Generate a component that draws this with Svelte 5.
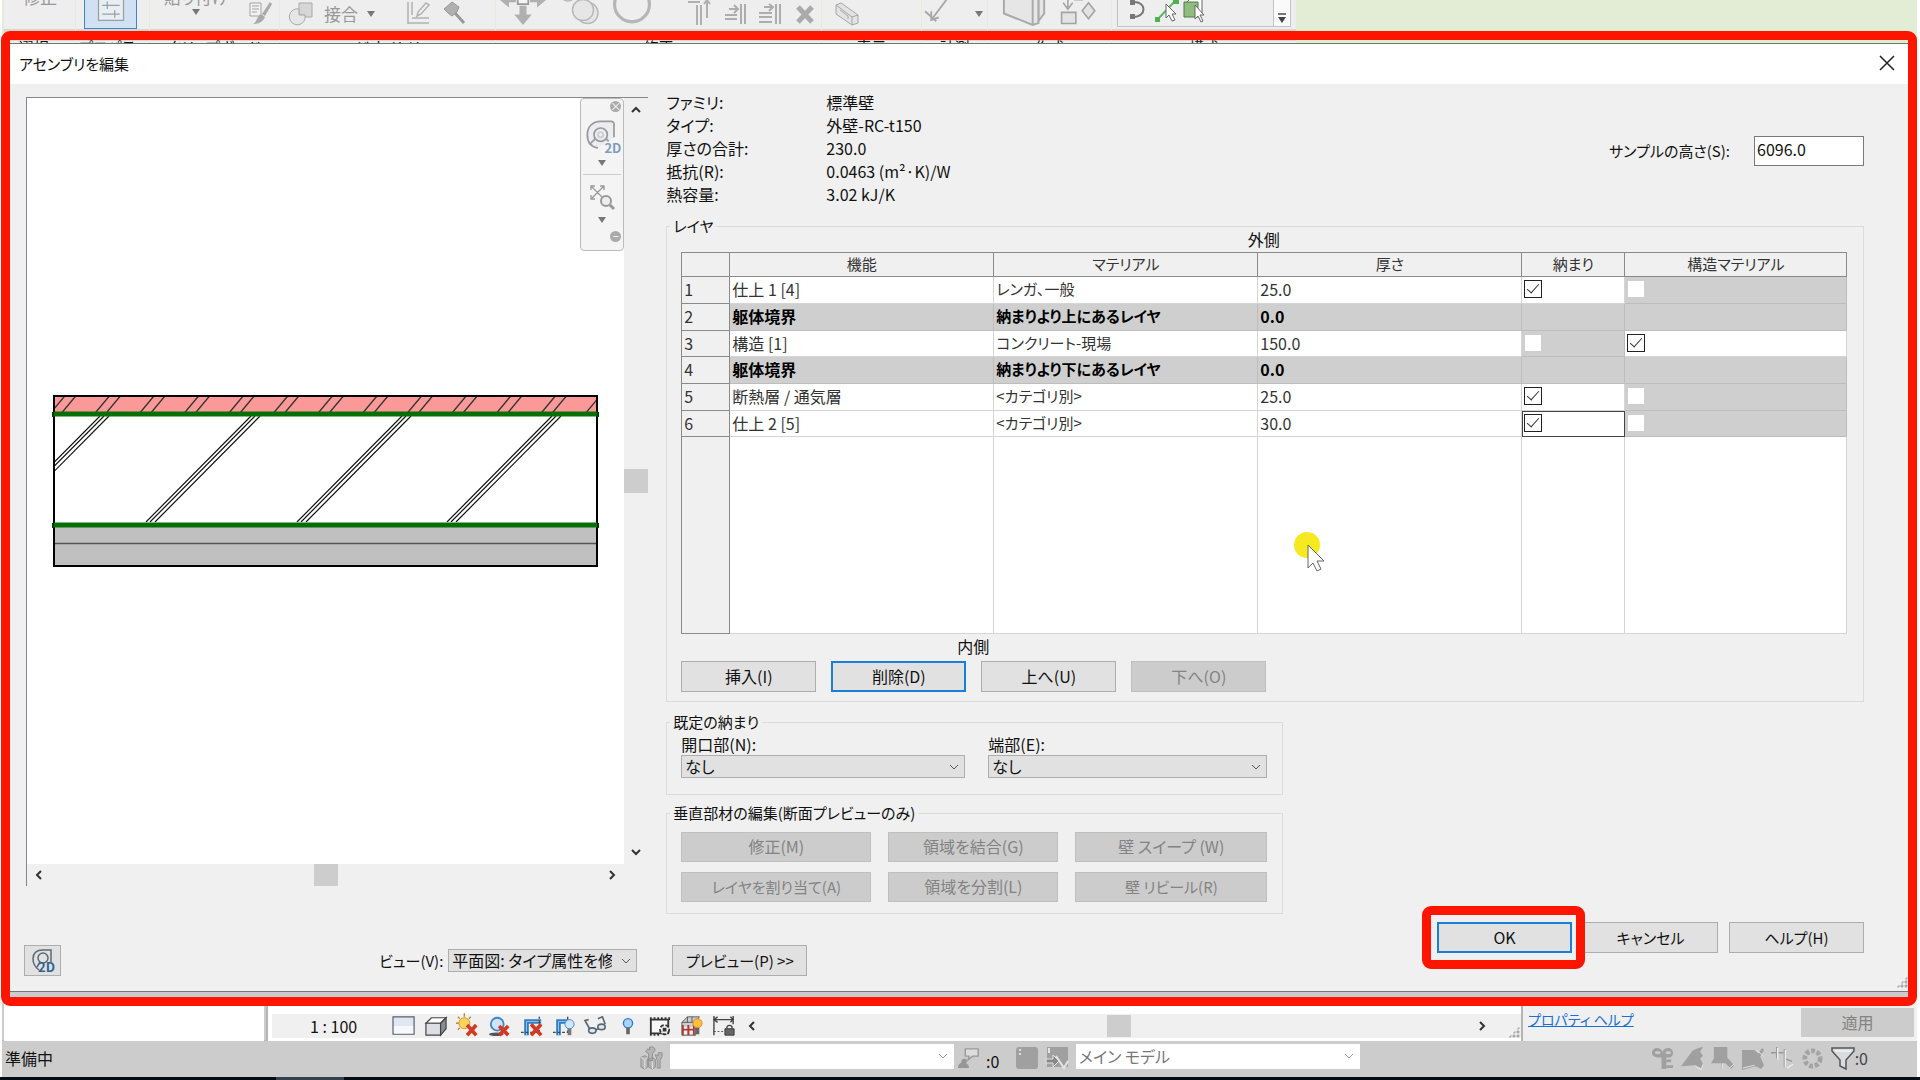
<script lang="ts">
    type Tool = { icon?: string; text?: string; arrow?: boolean; w: number; gap?: number; size?: number; on?: boolean };

    const ribbon: { label: string; width: number; tools: Tool[] }[] = [
        { label: "選択 ▾", width: 72, tools: [{ text: "修正", w: 72 }] },
        { label: "プロパティ", width: 74, tools: [{ icon: "sheet", w: 53, gap: 8, size: 30, on: true }] },
        {
            label: "クリップボード",
            width: 130,
            tools: [
                { text: "貼り付け", arrow: true, w: 92 },
                { icon: "brush", w: 36 },
            ],
        },
        {
            label: "ジオメトリ",
            width: 216,
            tools: [
                { icon: "join", w: 44 },
                { text: "接合", w: 34 },
                { arrow: true, w: 26 },
                { icon: "cope", w: 36, gap: 16 },
                { icon: "hammer", w: 36 },
            ],
        },
        {
            label: "修正",
            width: 326,
            tools: [
                { icon: "move", w: 54, size: 42 },
                { icon: "copy", w: 60, size: 36 },
                { icon: "rotate", w: 44, size: 38 },
                { icon: "trim", w: 36, gap: 28 },
                { icon: "extend", w: 34 },
                { icon: "extendMany", w: 36 },
                { icon: "cross", w: 34 },
            ],
        },
        { label: "表示", width: 100, tools: [{ icon: "solid", w: 50 }] },
        {
            label: "計測",
            width: 66,
            tools: [
                { icon: "measure", w: 36, size: 30 },
                { arrow: true, w: 18, gap: 12 },
            ],
        },
        {
            label: "作成",
            width: 124,
            tools: [
                { icon: "panelBox", w: 74, size: 46 },
                { icon: "similar", w: 34, size: 38 },
            ],
        },
    ];

    const art: Record<string, string> = {
        sheet: `<g fill="#e9eef3" stroke="#9a9fa5"><path d="M2 -6h20v27H2z"/><path fill="#a8adb3" d="M6 -2h9v4H6z"/><path d="M18 -2v4M5 9h14M9 6v6M5 16h14M15 13v6"/></g>`,
        brush: `<path fill="#f2f2f2" stroke="#a3a3a3" d="M2 2h11v13H2z"/><path stroke="#a3a3a3" d="M4 5h7M4 8h7M4 11h5"/><path fill="#aaa" d="M22 1l2 2-7 12-3-2zM13 13l4 3c-2 5-7 7-12 7 4-2 4-8 8-10z"/>`,
        join: `<path fill="#d6d6d6" stroke="#aaa" d="M9 2h13v14h-7v-2H9z"/><path fill="#e6e6e6" stroke="#aaa" d="M9 8a8 8 0 1 0 6 10v-4H9z"/>`,
        cope: `<g fill="none" stroke="#b2b2b2" stroke-width="1.5"><path d="M2 1v22M6 1v13M6 17h17M2 22h21M11 15l1-4 8-9 3 2-8 9z"/></g>`,
        hammer: `<path fill="#b0b0b0" stroke="#999" d="M2 8l8-7 7 5-2 5-5 4-4-3z"/><path stroke="#999" stroke-width="3" d="M13 12l9 10"/>`,
        move: `<g fill="#b0b0b0"><path d="M12 24l-5-6h3v-5h4v5h3zM-2 9l6-5v3h4v4H4v3zM26 9l-6-5v3h-4v4h4v3z"/><path fill="#f4f4f4" stroke="#999" d="M9 6h6v6H9z"/></g>`,
        copy: `<g fill="#e6e6e6" stroke="#b8b8b8"><circle cx="4" cy="3" r="5"/><circle cx="17" cy="16" r="7"/><circle cx="14" cy="14" r="7"/></g>`,
        rotate: `<circle cx="12" cy="11" r="11" fill="none" stroke="#b5b5b5" stroke-width="2"/>`,
        trim: `<g stroke="#b0b0b0" stroke-width="2"><path d="M0 1h12M9 4v20M13 4v20"/><path d="M19 0v17M16 3l3-4 3 4" fill="none"/></g>`,
        extend: `<g stroke="#adadad" stroke-width="2" fill="none"><path d="M18 3v20M22 3v20M2 14h12M2 18h12M6 8h9M11 4l4 4-4 4"/></g>`,
        extendMany: `<g stroke="#adadad" stroke-width="2" fill="none"><path d="M18 3v20M22 3v20M1 12h13M1 16h13M1 21h13M6 6h9M11 3l4 3-4 4"/></g>`,
        cross: `<path stroke="#aaa" stroke-width="5" d="M5 6l14 15M19 6L5 21"/>`,
        solid: `<g fill="#e3e3e3" stroke="#a6a6a6"><path d="M1 4l5-2 17 12v8l-6 2L1 13z"/><path fill="none" d="M1 4l16 12 6-2M17 16v8M5 9l8 6v3"/></g>`,
        measure: `<g stroke="#a8a8a8" stroke-width="1.5" fill="none"><path d="M5 20L26 -8M0 13l9 8M5 13v7l6-2"/></g>`,
        panelBox: `<g fill="#e6e6e6" stroke="#a9a9a9"><path d="M22 2v16l-3 4V4zM18 2v20l-3-1"/><path d="M1 5L4 2l15 5v16l-3 1-15-6z"/><path fill="none" d="M1 5l15 5v14"/></g>`,
        similar: `<g fill="#e3e3e3" stroke="#a3a3a3"><path d="M1 16h9v7H1zM18 10l4 5-4 5-4-5z"/><path fill="none" d="M5 0v13M2 10l3 4 3-4M9 0l5 7M14 3v5h-5"/></g>`,
        arc: `<path fill="none" stroke="#777" stroke-width="2" d="M5 4c14-1 14 15 0 15"/><path fill="#777" d="M2 2h5v5H2zM2 16h5v5H2z"/>`,
        pick: `<path stroke="#5cb85c" stroke-width="2" d="M2 22L22 1"/><path fill="#4fb14f" d="M0 19h5v5H0zM18 0h6v6h-6z"/><path fill="#fff" stroke="#666" d="M11 6v14l3-3 3 6 3-1-3-6h4z"/>`,
        face: `<path fill="#fff" stroke="#666" d="M5 4l3-3h12v14"/><path fill="#8fbc7f" stroke="#4d7a46" d="M2 4h14v15H2z"/><path fill="#fff" stroke="#666" d="M13 7v14l3-3 3 6 2-1-3-6h4z"/>`,
        wheel: `<g fill="none" stroke="#9a9a9a" stroke-width="1.3"><path fill="#ecedf3" d="M9 21C3 20 1 16 1 11 1 5 5 1 11 1h8c1 0 2 1 2 2v10"/><circle cx="11" cy="11" r="5"/><circle cx="11" cy="11" r="2" stroke="#ccc"/><path d="M3 18l4-4M15 14l2 2"/></g>`,
        wheelSmall: `<g fill="none" stroke="#5d6975" stroke-width="1.5"><path d="M8 22C4 19 2 16 2 11c0-7 4-9 10-9h8v12"/><circle cx="12" cy="10" r="5"/><path d="M6 19l3-5"/></g>`,
        zoomAll: `<g fill="none" stroke="#999" stroke-width="1.3"><path d="M1 1l11 11M14 1L2 13M1 5V1h4M10 1h4v4M1 10v4h4"/><circle cx="16" cy="16" r="5" fill="#eee" stroke-width="2"/><path d="M20 20l4 4" stroke-width="3"/></g>`,
        scale: `<path fill="#e1e7f2" stroke="#5b5f66" stroke-width="1.3" d="M0 2h23v19H0z"/><path fill="#f6f8fb" d="M1 12h21v8H1z"/>`,
        cube: `<path fill="#fff" stroke="#444" stroke-width="1.3" d="M1 9l6-6h16l-6 6z"/><path fill="#dcdfe3" stroke="#444" stroke-width="1.3" d="M1 9h16v13H1z"/><path fill="#888d94" stroke="#444" stroke-width="1.3" d="M17 9l6-6v12l-6 7z"/>`,
        sun: `<path stroke="#b88a20" stroke-width="1.5" d="M8 -2v4M-1 9h4M1 2l2 2M15 2l-2 2M1 16l2-2"/><circle cx="8" cy="9" r="6" fill="#ffd35c" stroke="#c8962b"/><path stroke="#d23a24" stroke-width="4" d="M11 11l10 11M21 11L11 22"/>`,
        shadow: `<ellipse cx="8" cy="21" rx="8" ry="2" fill="#555"/><circle cx="9" cy="10" r="7" fill="#cfe4f8" stroke="#3f86c8" stroke-width="2"/><path stroke="#d23a24" stroke-width="4" d="M11 12l10 10M21 12L11 22"/>`,
        crop: `<path fill="none" stroke="#2e7cc4" stroke-width="5" d="M6 22V7h16"/><path stroke="#9fcaf0" d="M6 22V7h16"/><path stroke="#444" stroke-width="1.5" stroke-dasharray="3 2" fill="none" d="M0 19h20V2"/><path stroke="#d23a24" stroke-width="4" d="M11 10l11 12M22 10L11 22"/>`,
        cropShow: `<path fill="none" stroke="#2e7cc4" stroke-width="5" d="M6 22V7h12"/><path stroke="#9fcaf0" d="M6 22V7h12"/><path stroke="#444" stroke-width="1.5" stroke-dasharray="3 2" fill="none" d="M0 19h16V2"/><circle cx="18" cy="10" r="5" fill="#cfe6ff" stroke="#3f86c8"/><path fill="#777" d="M16 15h4v7h-4z"/>`,
        glasses: `<g fill="#dceaf2" stroke="#5c6670" stroke-width="1.8"><path fill="none" d="M5 15L0 6l4-1M22 10l-3-8-5 2M11 17l3-2"/><ellipse cx="8" cy="17" rx="4" ry="3"/><ellipse cx="18" cy="13" rx="4" ry="3"/></g>`,
        bulb: `<circle cx="12" cy="9" r="5" fill="#a9d3fb" stroke="#2e7cc4" stroke-width="1.5"/><path fill="#666" d="M10 14h4v7h-4z"/>`,
        film: `<path fill="#f6f6f6" stroke="#333" stroke-width="2" d="M2 5h19v15H2z"/><path stroke="#333" stroke-width="3" stroke-dasharray="2 2" d="M1 4h22M1 21h12"/><circle cx="17" cy="16" r="5" fill="#eee" stroke="#333" stroke-width="2" stroke-dasharray="4 2"/><path fill="#333" d="M15 14h4v4h-4z"/>`,
        house: `<path fill="#c9ccd0" stroke="#555" d="M1 8l6-6h13l-4 6v14H1z"/><path fill="#f0f0f0" d="M3 13h4v8H3zM10 13h4v8h-4z"/><path stroke="#b0392b" stroke-width="2" d="M2 11v11M8 11v11M14 11v11M2 16h13"/><path stroke="#555" d="M1 8h14M7 2v6M12 2v6"/><circle cx="18" cy="9" r="5" fill="#ffc043" stroke="#d98a16"/><path fill="#666" d="M16 14h4v7h-4z"/>`,
        reveal: `<path fill="none" stroke="#444" stroke-width="1.5" d="M1 1v21M22 1v9M1 5h21M5 2L1 5l4 3M19 2l3 3-3 3"/><path stroke="#444" stroke-dasharray="2 2" d="M1 18h12"/><path fill="#666" stroke="#333" d="M13 15h10v7H13z"/><path fill="none" stroke="#444" stroke-width="1.5" d="M15 15c0-5 6-5 6 0"/>`,
        groups: `<g fill="#b5b5b5" stroke="#909090"><path d="M8 2l2 1V0h4l2 3-3 4v7H9V7L6 5zM1 11l4-2 3 2v10l-3 2-4-2zM9 13l4-2 3 2v8l-3 2-4-2z"/><path fill="none" stroke="#e4e4e4" d="M1 11l4 2 3-2M5 13v10M13 15v8"/><path d="M16 8l3 1V6h4v4l-2 4v8h-3v-8z"/></g>`,
        review: `<path fill="#ddd" stroke="#999" stroke-width="1.5" d="M8 2h14v8h-6l-5 4 1-4H8z"/><path fill="#979797" d="M0 23c0-4 2-5 4-6-2-4 5-6 6-2l-1 3c2 1 3 2 3 5z"/>`,
        design: `<rect x="1" y="1" width="22" height="22" rx="3" fill="#a0a0a0"/><path stroke="#ddd" stroke-width="2" stroke-dasharray="2 2" d="M5 3v7"/>`,
        designAdd: `<path fill="#a0a0a0" d="M2 1h21v20H2z"/><path fill="#888" stroke="#e4e4e4" d="M1 13h7V9l6 6-6 6v-4H1z"/><path stroke="#e4e4e4" stroke-width="2" d="M4 2v5M11 10l8 12 4-7" fill="none"/>`,
        links: `<g fill="#a0a0a0"><path d="M12 5c2-6 11-5 11 1s-6 5-7 5v12h-5V11S1 12 1 6 10-1 12 5z"/><path d="M16 13h5v3h-5zM16 19h7v3h-7z"/></g><ellipse cx="7" cy="6" rx="3" ry="1.500" fill="#ccc"/><ellipse cx="18" cy="6" rx="3" ry="1.500" fill="#ccc"/>`,
        underlay: `<path fill="#a0a0a0" d="M0 20L12 4l6-3 5-1-3 5 3 4-3 3 3 6-2 4-6-3z"/><path stroke="#e4e4e4" d="M15 20l6 4 2-6"/>`,
        pinned: `<path fill="#a0a0a0" d="M3 0h14v11l7 8-3 4-6-6h-3v6h-1v-6H0l3-5z"/><path stroke="#e4e4e4" d="M12 17v6M19 22l5-4"/>`,
        faces: `<path fill="#a0a0a0" d="M1 3h13l4 4 4-6 2 2-4 7 4 9-3 4-6-3-14 4z"/><path stroke="#e4e4e4" d="M2 22l12-3M16 3l8 7"/>`,
        drag: `<g fill="none" stroke="#999" stroke-width="1.5"><path d="M6 0v12M0 6h13M14 2v19M14 12l8 3"/><path stroke="#eee" d="M7 1v12M15 3v18M17 22l6-4"/></g>`,
        process: `<circle cx="12" cy="12" r="8" fill="none" stroke="#a3a3a3" stroke-width="5" stroke-dasharray="4 2"/>`,
        filter: `<path fill="#d8dbe0" stroke="#555" stroke-width="1.5" d="M1 2h22v3l-8 9v9l-6-3v-6L1 5z"/><path stroke="#fff" d="M4 5h16"/>`,
    };

    const viewTools = ["scale", "cube", "sun", "shadow", "crop", "cropShow", "glasses", "bulb", "film", "house", "reveal"];
    const selectTools = ["links", "underlay", "pinned", "faces", "drag", "process"];

    const info = [
        ["ファミリ:", "標準壁"],
        ["タイプ:", "外壁-RC-t150"],
        ["厚さの合計:", "230.0"],
        ["抵抗(R):", "0.0463 (m²·K)/W"],
        ["熱容量:", "3.02 kJ/K"],
    ];

    let layers = $state([
        { fn: "仕上 1 [4]", material: "レンガ、一般", thickness: "25.0", wraps: true, structural: false },
        { fn: "躯体境界", material: "納まりより上にあるレイヤ", thickness: "0.0", core: true },
        { fn: "構造 [1]", material: "コンクリート-現場", thickness: "150.0", wraps: false, structural: true },
        { fn: "躯体境界", material: "納まりより下にあるレイヤ", thickness: "0.0", core: true },
        { fn: "断熱層 / 通気層", material: "<カテゴリ別>", thickness: "25.0", wraps: true, structural: false },
        { fn: "仕上 2 [5]", material: "<カテゴリ別>", thickness: "30.0", wraps: true, structural: false },
    ]);
    let selected = $state(5);
    let sampleHeight = $state("6096.0");

    const brickLines = Array.from({ length: 14 }, (_, i) => -47 + i * 44.6);
    const concreteLines = [-59, 92, 243, 393];
</script>

{#snippet icon(name: string, size = 24)}
    <svg class="icon" width={size} height={size} viewBox="0 0 24 24" fill="none">{@html art[name]}</svg>
{/snippet}

{#snippet chevron(dir: string)}
    <svg class="chevron {dir}" width="10" height="10" viewBox="0 0 10 10"><path d="M1 3l4 4 4-4" /></svg>
{/snippet}

{#snippet triangle()}
    <svg class="triangle" width="8" height="6" viewBox="0 0 8 6"><path d="M0 0h8L4 6z" /></svg>
{/snippet}

<div class="screen">
    <header class="ribbon">
        {#each ribbon as panel}
            <section class="panel" style:width="{panel.width}px">
                <div class="tools">
                    {#each panel.tools as tool}
                        <button
                            class="tool"
                            class:on={tool.on}
                            class:stacked={tool.text && tool.arrow}
                            style:width="{tool.w}px"
                            style:margin-left="{tool.gap ?? 0}px"
                        >
                            {#if tool.icon}{@render icon(tool.icon, tool.size)}{/if}
                            {#if tool.text}<span class:cut={tool.text !== "接合"}>{tool.text}</span>{/if}
                            {#if tool.arrow}{@render triangle()}{/if}
                        </button>
                    {/each}
                </div>
                <div class="panel-label">{panel.label}</div>
            </section>
        {/each}
        <section class="panel draw">
            <div class="gallery">
                <button class="tool">{@render icon("arc")}</button>
                <button class="tool">{@render icon("pick")}</button>
                <button class="tool">{@render icon("face")}</button>
                <button class="more">{@render triangle()}</button>
            </div>
            <div class="panel-label">構成</div>
        </section>
    </header>

    <main class="dialog">
        <div class="titlebar">
            <h1>アセンブリを編集</h1>
            <button class="close">
                <svg width="16" height="16" viewBox="0 0 16 16"><path d="M1 1l14 14M15 1L1 15" /></svg>
            </button>
        </div>

        <div class="body">
            <div class="left">
                <div class="pane">
                    <div class="view">
                        <svg width="547" height="174" viewBox="-2 0 547 174">
                            <defs>
                                <clipPath id="brick"><path d="M1 2h541v16H1z" /></clipPath>
                                <clipPath id="concrete"><path d="M1 22h541v106H1z" /></clipPath>
                            </defs>
                            <path fill="#fb9898" d="M1 2h541v16H1z" />
                            <g clip-path="url(#brick)" stroke="#333" stroke-width="1.4">
                                {#each brickLines as x}
                                    <path d="M{x - 1} 19l15 -18M{x + 10} 19l15 -18" />
                                {/each}
                            </g>
                            <g clip-path="url(#concrete)" stroke="#111" stroke-width="1.2">
                                {#each concreteLines as x}
                                    <path d="M{x} 128l105 -106M{x + 4} 128l105 -106M{x + 9} 128l105 -106" />
                                {/each}
                            </g>
                            <path fill="#c0c0c0" d="M1 132h541v39H1z" />
                            <path stroke="#555" stroke-width="1.5" d="M1 149.500h541" />
                            <path fill="none" stroke="#000" stroke-width="2" d="M0 2h543v170H0z" />
                            <path stroke="#067006" stroke-width="5" d="M0 20h543M0 131h543" />
                            <path fill="#033d03" d="M-2 18h2v5h-2zM543 18h2v5h-2zM-2 129h2v5h-2zM543 129h2v5h-2z" />
                        </svg>
                        <div class="navbar">
                            <button class="round">×</button>
                            <button class="wheel">{@render icon("wheel", 32)}<b>2D</b></button>
                            <button>{@render triangle()}</button>
                            <hr />
                            <button class="fit">{@render icon("zoomAll")}</button>
                            <button>{@render triangle()}</button>
                            <button class="round">−</button>
                        </div>
                    </div>
                    <div class="vbar">
                        <button>{@render chevron("up")}</button>
                        <span class="thumb"></span>
                        <button>{@render chevron("down")}</button>
                    </div>
                    <div class="hbar">
                        <button>{@render chevron("left")}</button>
                        <span class="thumb"></span>
                        <button>{@render chevron("right")}</button>
                    </div>
                </div>
                <div class="view-row">
                    <button class="btn wheel small">{@render icon("wheelSmall", 24)}<b>2D</b></button>
                    <div class="view-pick">
                        <label for="view">ビュー(V):</label>
                        <span class="select">
                            <select id="view"><option>平面図: タイプ属性を修</option></select>
                            {@render chevron("down")}
                        </span>
                    </div>
                </div>
            </div>

            <div class="right">
                <div class="summary">
                    <dl>
                        {#each info as [name, value]}
                            <dt>{name}</dt>
                            <dd>{value}</dd>
                        {/each}
                    </dl>
                    <div class="sample">
                        <label for="sample">サンプルの高さ(S):</label>
                        <input id="sample" type="text" bind:value={sampleHeight} />
                    </div>
                </div>

                <fieldset class="layers">
                    <legend>レイヤ</legend>
                    <div class="side">外側</div>
                    <table>
                        <colgroup>
                            <col class="c-num" /><col class="c-fn" /><col class="c-fn" /><col class="c-fn" /><col class="c-wrap" /><col class="c-struct" />
                        </colgroup>
                        <thead>
                            <tr>
                                <th></th>
                                <th>機能</th>
                                <th>マテリアル</th>
                                <th>厚さ</th>
                                <th id="wraps">納まり</th>
                                <th id="structural">構造マテリアル</th>
                            </tr>
                        </thead>
                        <tbody>
                            {#each layers as layer, i}
                                <tr class:core={layer.core} onclick={() => (selected = i)}>
                                    <th scope="row">{i + 1}</th>
                                    <td>{layer.fn}</td>
                                    <td class="material">{layer.material}</td>
                                    <td>{layer.thickness}</td>
                                    {#if layer.core}
                                        <td></td>
                                        <td></td>
                                    {:else}
                                        <td class:off={!layer.wraps} class:current={selected === i}>
                                            <input type="checkbox" aria-labelledby="wraps" bind:checked={layer.wraps} disabled={!layer.wraps} />
                                        </td>
                                        <td class:off={!layer.structural}>
                                            <input type="checkbox" aria-labelledby="structural" bind:checked={layer.structural} disabled={!layer.structural} />
                                        </td>
                                    {/if}
                                </tr>
                            {/each}
                            <tr class="rest"><th></th><td></td><td></td><td></td><td></td><td></td></tr>
                        </tbody>
                    </table>
                    <div class="side inner">内側</div>
                    <div class="row-buttons">
                        <button class="btn">挿入(I)</button>
                        <button class="btn focus">削除(D)</button>
                        <button class="btn">上へ(U)</button>
                        <button class="btn" disabled>下へ(O)</button>
                    </div>
                </fieldset>

                <fieldset class="wrapping">
                    <legend>既定の納まり</legend>
                    <div class="field">
                        <label for="inserts">開口部(N):</label>
                        <span class="select">
                            <select id="inserts"><option>なし</option></select>
                            {@render chevron("down")}
                        </span>
                    </div>
                    <div class="field">
                        <label for="ends">端部(E):</label>
                        <span class="select">
                            <select id="ends"><option>なし</option></select>
                            {@render chevron("down")}
                        </span>
                    </div>
                </fieldset>

                <fieldset class="vertical">
                    <legend>垂直部材の編集(断面プレビューのみ)</legend>
                    <button class="btn" disabled>修正(M)</button>
                    <button class="btn" disabled>領域を結合(G)</button>
                    <button class="btn" disabled>壁 スイープ (W)</button>
                    <button class="btn kana" disabled>レイヤを割り当て(A)</button>
                    <button class="btn" disabled>領域を分割(L)</button>
                    <button class="btn kana" disabled>壁 リビール(R)</button>
                </fieldset>

                <div class="actions">
                    <button class="btn kana preview">プレビュー(P) &gt;&gt;</button>
                    <button class="btn focus ok">OK</button>
                    <button class="btn kana">キャンセル</button>
                    <button class="btn kana">ヘルプ(H)</button>
                </div>
            </div>
        </div>
        <div class="grip"></div>
    </main>

    <div class="workspace">
        <div class="browser"></div>
        <div class="viewbar">
            <div class="strip">
                <span class="ratio">1 : 100</span>
                {#each viewTools as name}
                    <button>{@render icon(name, 22)}</button>
                {/each}
                <button>{@render chevron("left")}</button>
                <span class="thumb"></span>
                <button class="end">{@render chevron("right")}</button>
            </div>
            <div class="grip"></div>
        </div>
        <div class="properties">
            <a href="#help">プロパティ ヘルプ</a>
            <button class="btn" disabled>適用</button>
        </div>
    </div>

    <footer class="status">
        <span class="message">準備中</span>
        {@render icon("groups", 23)}
        <span class="select plain">
            <select aria-label="準備中"><option></option></select>
            {@render chevron("down")}
        </span>
        {@render icon("review", 22)}
        <span class="count">:0</span>
        {@render icon("design", 24)}
        {@render icon("designAdd", 24)}
        <span class="select plain">
            <select aria-label="メイン モデル"><option>メイン モデル</option></select>
            {@render chevron("down")}
        </span>
        <div class="toggles">
            {#each selectTools as name}
                <button>{@render icon(name, 23)}</button>
            {/each}
            <button>{@render icon("filter", 24)}</button>
            <span>:0</span>
        </div>
    </footer>
    <div class="taskbar"><span></span></div>

    <div class="frame"></div>
    <div class="pointer">
        <svg width="34" height="44" viewBox="0 0 34 44">
            <circle cx="13" cy="13" r="13" fill="#f6e91f" />
            <path fill="#fff" stroke="#666" d="M14 13v23l5-5 4 8 4-2-4-8h7z" />
        </svg>
    </div>
</div>

<style>
    :global(body) {
        margin: 0;
        background: #fff;
    }

    .screen {
        position: relative;
        display: flex;
        flex-direction: column;
        min-height: 100vh;
        overflow: hidden;
        font-family: "Noto Sans CJK JP", sans-serif;
        font-feature-settings: "palt";
        font-size: 16px;
        line-height: 23px;
        color: #111;
    }

    button,
    input,
    select {
        font: inherit;
        font-feature-settings: inherit;
        color: inherit;
        box-sizing: border-box;
        margin: 0;
    }

    button {
        display: flex;
        align-items: center;
        justify-content: center;
        padding: 0;
        border: 0;
        background: none;
    }

    .icon {
        flex: none;
        overflow: visible;
    }

    .chevron {
        flex: none;
        fill: none;
        stroke: #333;
        stroke-width: 2;
    }

    .chevron.up {
        transform: rotate(180deg);
    }

    .chevron.left {
        transform: rotate(90deg);
    }

    .chevron.right {
        transform: rotate(-90deg);
    }

    .triangle {
        flex: none;
        fill: #777;
    }

    /* ribbon */
    .ribbon {
        display: flex;
        height: 43px;
        margin: 0 3px 0 2px;
        padding-left: 2px;
        overflow: hidden;
        background: #e3edd5;
        border-bottom: 1px solid #6d7a6b;
    }

    .panel {
        flex: none;
        box-sizing: border-box;
        border-right: 1px solid #e6ebdf;
        background: #eee;
    }

    .tools {
        display: flex;
        align-items: flex-end;
        height: 29px;
    }

    .tool {
        flex: none;
        align-items: flex-end;
        padding-bottom: 4px;
        color: #999;
        font-size: 17px;
    }

    .tool.on {
        height: 40px;
        border: 1px solid #3c86d2;
        background: #cfe1f3;
    }

    .tool .triangle {
        margin-bottom: 8px;
    }

    .tool.stacked {
        flex-direction: column;
        align-items: center;
    }

    .tool .cut {
        margin-bottom: 17px;
    }

    .tool.stacked .cut {
        margin-bottom: 1px;
    }

    .tool.stacked .triangle {
        margin-bottom: 10px;
    }

    .panel-label {
        padding-top: 10px;
        background: #eee;
        box-shadow: inset 0 12px #d3d8cf;
        font-size: 15px;
        line-height: 16px;
        text-align: center;
        white-space: nowrap;
    }

    .draw {
        width: 184px;
        border-right: 0;
    }

    .gallery {
        display: flex;
        gap: 3px;
        height: 27px;
        margin: 0 5px 2px;
        padding-left: 10px;
        border: 1px solid #bfc3c7;
        border-top: 0;
        box-sizing: border-box;
    }

    .gallery .tool {
        width: 24px;
    }

    .more {
        align-items: flex-end;
        width: 17px;
        margin-left: auto;
        padding-bottom: 3px;
        border-left: 1px solid #bfc3c7;
        background: #fafafa;
    }

    .more .triangle {
        padding-top: 2px;
        border-top: 2px solid #777;
        fill: #444;
    }

    /* dialog */
    .dialog {
        position: relative;
        flex: 1;
        display: flex;
        flex-direction: column;
        margin: 0 11px 0 10px;
        background: #f0f0f0;
        border-bottom: 1px solid #777;
    }

    .titlebar {
        display: flex;
        align-items: center;
        justify-content: space-between;
        height: 38px;
        padding: 0 14px 2px 9px;
        background: #fff;
    }

    h1 {
        margin: 0;
        font-size: 15px;
        font-weight: 400;
    }

    .close svg {
        fill: none;
        stroke: #222;
        stroke-width: 1.5;
    }

    .body {
        flex: 1;
        display: grid;
        grid-template-columns: 622fr 1197fr;
        gap: 18px;
        padding: 13px 45px 15px 16px;
    }

    .left,
    .right {
        display: flex;
        flex-direction: column;
        min-width: 0;
    }

    .pane {
        flex: 1;
        display: grid;
        grid-template-columns: 1fr 24px;
        grid-template-rows: 1fr 22px;
        border-top: 1px solid #828790;
        border-left: 1px solid #828790;
    }

    .view {
        position: relative;
        display: flex;
        align-items: center;
        justify-content: center;
        background: #fff;
    }

    .navbar {
        position: absolute;
        top: 0;
        right: 0;
        display: flex;
        flex-direction: column;
        align-items: center;
        gap: 8px;
        width: 44px;
        height: 153px;
        padding: 2px;
        box-sizing: border-box;
        border: 1px solid #bbb;
        border-radius: 4px;
        background: #f4f4f4;
    }

    .navbar hr {
        width: 100%;
        margin: 0;
        border: 0;
        border-top: 1px solid #ccc;
    }

    .round {
        align-self: flex-end;
        width: 11px;
        height: 11px;
        border-radius: 50%;
        background: #aaa;
        color: #fff;
        font-size: 11px;
        line-height: 11px;
    }

    .wheel {
        position: relative;
    }

    .wheel b {
        position: absolute;
        right: -3px;
        bottom: -2px;
        color: #7d9dbf;
        font-size: 13px;
        line-height: 13px;
    }

    .fit {
        margin-top: 2px;
    }

    .vbar,
    .hbar {
        display: flex;
        align-items: center;
        justify-content: space-between;
    }

    .vbar {
        flex-direction: column;
        padding: 7px 0;
    }

    .hbar {
        padding: 0 7px;
    }

    .thumb {
        width: 24px;
        height: 24px;
        background: #cdcdcd;
    }

    .hbar .thumb {
        height: 22px;
    }

    .view-row {
        display: flex;
        justify-content: space-between;
        align-items: center;
        margin: 59px 11px 0 -2px;
    }

    .btn {
        height: 31px;
        padding-bottom: 1px;
        border: 1px solid #adadad;
        background: #e1e1e1;
    }

    .btn.focus {
        border: 2px solid #1a7fd6;
    }

    .btn:disabled {
        border-color: #bfbfbf;
        background: #ccc;
        color: #838383;
    }

    .btn.small {
        width: 37px;
    }

    .small b {
        right: 5px;
        bottom: 2px;
        color: #2f6593;
    }

    .kana {
        font-size: 15px;
    }

    .view-pick {
        display: flex;
        align-items: center;
        gap: 5px;
        font-size: 15px;
    }

    .select {
        position: relative;
        display: flex;
        align-items: center;
    }

    select {
        appearance: none;
        width: 100%;
        height: 23px;
        padding: 0 24px 0 3px;
        border: 1px solid #adadad;
        border-radius: 0;
        background: #e1e1e1;
        line-height: 21px;
    }

    .select .chevron {
        position: absolute;
        right: 6px;
        stroke: #555;
        stroke-width: 1;
        pointer-events: none;
    }

    .view-pick select {
        width: 189px;
        font-size: 16px;
    }

    .summary {
        display: flex;
        justify-content: space-between;
        align-items: flex-start;
        height: 118px;
    }

    dl {
        display: grid;
        grid-template-columns: 160px auto;
        margin: -6px 0 0;
    }

    dd {
        margin: 0;
    }

    .sample {
        display: flex;
        align-items: center;
        gap: 24px;
        margin: 39px 0 0;
    }

    .sample label {
        padding-bottom: 2px;
        font-size: 15px;
    }

    .sample input {
        width: 110px;
        height: 30px;
        padding: 0 2px 5px;
        border: 1px solid #7a7a7a;
        background: #fff;
    }

    fieldset {
        margin: 0;
        padding: 0 17px 0 14px;
        border: 1px solid #dcdcdc;
        box-sizing: border-box;
        min-width: 0;
    }

    legend {
        margin-left: -11px;
        padding: 0 3px;
        font-size: 15px;
        line-height: 22px;
    }

    .layers {
        height: 487px;
    }

    .side {
        height: 24px;
        margin-top: -9px;
        text-align: center;
    }

    .inner {
        width: 584px;
        margin-top: 1px;
    }

    table {
        width: 100%;
        border-collapse: collapse;
        table-layout: fixed;
    }

    .c-num {
        width: 48px;
    }

    .c-fn {
        width: 264px;
    }

    .c-wrap {
        width: 103px;
    }

    .c-struct {
        width: 222px;
    }

    th,
    td {
        padding: 0 2px 2px;
        line-height: 20px;
        text-align: left;
        overflow: hidden;
        white-space: nowrap;
    }

    th {
        border: 1px solid #8a8a8a;
        background: #f0f0f0;
        color: #333;
        font-weight: 400;
    }

    thead th {
        height: 24px;
        box-sizing: border-box;
        font-size: 15px;
        text-align: center;
    }

    tbody tr {
        height: 27px;
    }

    tbody tr:nth-child(3n) {
        height: 26px;
    }

    td {
        border: 1px solid #d5d5d5;
        background: #fff;
        color: #333;
    }

    .material {
        font-size: 15px;
    }

    .core td {
        border-color: #bdbdbd;
        background: #cfcfcf;
        color: #000;
        font-weight: 700;
    }

    td.off {
        border-color: #bdbdbd;
        background: #cfcfcf;
    }

    td.current {
        outline: 1px solid #444;
        outline-offset: -1px;
    }

    .rest {
        height: 197px;
    }

    td input {
        appearance: none;
        display: block;
        position: relative;
        width: 18px;
        height: 18px;
        border: 1px solid transparent;
        background: #fff;
        background-clip: padding-box;
    }

    td input:checked {
        border-color: #222;
    }

    td input:checked::after {
        content: "";
        position: absolute;
        left: 5px;
        top: 0;
        width: 5px;
        height: 11px;
        border: solid #333;
        border-width: 0 1px 1px 0;
        transform: rotate(42deg);
    }

    .row-buttons {
        display: flex;
        gap: 15px;
        margin-top: 2px;
    }

    .row-buttons .btn,
    .actions .btn {
        width: 135px;
    }

    .wrapping,
    .vertical {
        width: 617px;
        max-width: 100%;
    }

    .wrapping {
        display: grid;
        grid-template-columns: 285fr 280fr;
        column-gap: 23px;
        height: 84px;
        margin-top: 9px;
        padding-right: 15px;
        align-content: start;
    }

    .field .select {
        margin-top: -1px;
    }

    .field label {
        display: block;
    }

    .vertical {
        display: grid;
        grid-template-columns: 190fr 170fr 192fr;
        gap: 10px 17px;
        align-content: start;
        height: 112px;
        margin-top: 7px;
        padding-right: 15px;
        padding-top: 8px;
    }

    .vertical .btn {
        height: 30px;
    }

    .actions {
        display: flex;
        gap: 11px;
        align-items: flex-start;
        margin-top: 8px;
    }

    .actions .preview {
        margin: 23px auto 0 6px;
    }

    .ok {
        position: relative;
    }

    .ok::after {
        content: "";
        position: absolute;
        inset: -18px -15px -18px -17px;
        z-index: 1;
        border: 9px solid #fe1500;
        border-radius: 9px;
    }

    .grip {
        position: absolute;
        right: 1px;
        bottom: 3px;
        width: 12px;
        height: 12px;
        background: radial-gradient(circle, #a8a8a8 1px, transparent 2px) 0 0 / 4px 4px;
        clip-path: polygon(100% 0, 100% 100%, 0 100%);
    }

    /* area behind the dialog */
    .workspace {
        display: grid;
        grid-template-columns: 264px 1fr 394px;
        height: 49px;
        margin: 0 3px 0 2px;
        background: #ccc;
        box-sizing: border-box;
        border-bottom: 1px solid #bbb;
    }

    .browser {
        margin: 5px 2px 0 2px;
        background: #fff;
    }

    .viewbar {
        position: relative;
        border-left: 2px solid #b5b5b5;
        border-right: 2px solid #b5b5b5;
        margin-top: 5px;
        padding: 17px 0 3px 4px;
        background: #fff;
    }

    .strip {
        display: flex;
        align-items: center;
        gap: 10px;
        height: 24px;
        background: #f0f0f0;
    }

    .ratio {
        width: 73px;
        padding-left: 38px;
        white-space: nowrap;
    }

    .strip .chevron {
        margin-left: 2px;
    }

    .strip .thumb {
        height: 22px;
        margin-left: 340px;
    }

    .strip .end {
        margin-left: auto;
        margin-right: 34px;
    }

    .properties {
        display: flex;
        align-items: flex-end;
        justify-content: space-between;
        margin-top: 5px;
        padding: 0 3px 4px 5px;
        background: #f0f0f0;
    }

    .properties a {
        align-self: center;
        margin-top: 4px;
        color: #1a6fd0;
        font-size: 14px;
        text-decoration: underline;
    }

    .properties .btn {
        width: 113px;
        height: 29px;
        border: 0;
    }

    .status {
        display: flex;
        align-items: center;
        height: 36px;
        margin: 0 3px 0 2px;
        padding: 0 0 2px 3px;
        box-sizing: border-box;
        background: #ccc;
    }

    .message {
        width: 635px;
    }

    .plain {
        width: 284px;
        margin: 0 4px 4px 7px;
    }

    .plain select {
        height: 25px;
        border: 0;
        background: #fff;
        color: #777;
    }

    .plain .chevron {
        stroke: #999;
    }

    .count {
        width: 35px;
        padding: 6px 0 0 6px;
        box-sizing: border-box;
    }

    .status .icon + .icon {
        margin-left: 6px;
    }

    .toggles {
        display: flex;
        align-items: center;
        gap: 7px;
        margin: 0 49px 0 auto;
        color: #444;
    }

    .toggles span {
        margin-left: -7px;
    }

    .taskbar {
        height: 3px;
        background: #050d14;
    }

    .taskbar span {
        display: block;
        width: 68px;
        height: 3px;
        margin-left: 276px;
        background: #33424e;
    }

    .frame {
        position: absolute;
        inset: 31px 3px 74px 1px;
        border: 9px solid #fe1500;
        border-radius: 9px;
        pointer-events: none;
    }

    .pointer {
        position: absolute;
        left: 1294px;
        top: 532px;
        pointer-events: none;
    }
</style>
